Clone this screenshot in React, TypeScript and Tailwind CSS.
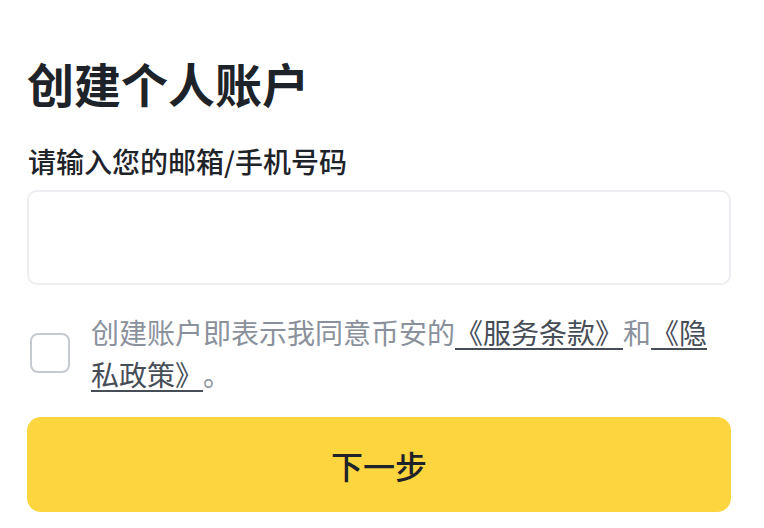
import React from "react";

export default function App() {
  return (
    <div
      className="w-[764px] h-[528px] bg-white overflow-hidden flex flex-col pl-[27px] pr-[33px] pt-[54px]"
      style={{ fontFamily: '"Noto Sans CJK SC", "Noto Sans", sans-serif' }}
    >
      <h1 className="text-[47px] leading-[58px] font-bold text-[#1e2329]">创建个人账户</h1>
      <label className="mt-[31px] text-[28px] leading-[36px] font-medium text-[#1e2329] ml-[1px]">
        请输入您的邮箱/手机号码
      </label>
      <div className="mt-[11px] h-[95px] w-full rounded-[10px] border-2 border-[#eceef1] bg-white" />
      <div className="mt-[26px] flex items-center">
        <div className="ml-[3px] w-[40px] h-[40px] shrink-0 rounded-[8px] border-2 border-[#c5cad1] bg-white" />
        <p className="ml-[21px] flex-1 text-[28px] leading-[42px] text-[#8a919c] [text-spacing-trim:space-all]">
          创建账户即表示我同意币安的
          <span className="text-[#474d57] underline decoration-[2px] underline-offset-[4px]">《服务条款》</span>
          和
          <span className="text-[#474d57] underline decoration-[2px] underline-offset-[4px]">《隐私政策》</span>
          。
        </p>
      </div>
      <button className="mt-[22px] h-[95px] w-full rounded-[14px] bg-[#fcd53f] text-[32px] font-medium text-[#1e2329]">
        下一步
      </button>
    </div>
  );
}
